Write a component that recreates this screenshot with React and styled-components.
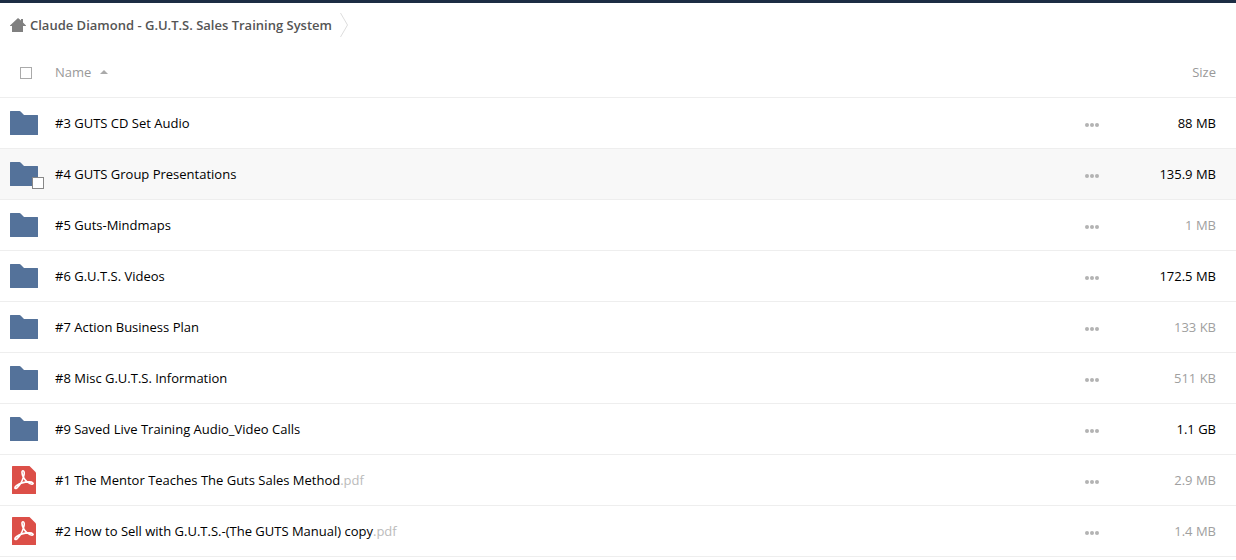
import React, { useState } from "react";
import styled, { createGlobalStyle } from "styled-components";

const initialFiles = [
  { name: "#3 GUTS CD Set Audio", type: "folder", size: "88 MB", large: true },
  { name: "#4 GUTS Group Presentations", type: "folder", size: "135.9 MB", large: true },
  { name: "#5 Guts-Mindmaps", type: "folder", size: "1 MB" },
  { name: "#6 G.U.T.S. Videos", type: "folder", size: "172.5 MB", large: true },
  { name: "#7 Action Business Plan", type: "folder", size: "133 KB" },
  { name: "#8 Misc G.U.T.S. Information", type: "folder", size: "511 KB" },
  { name: "#9 Saved Live Training Audio_Video Calls", type: "folder", size: "1.1 GB", large: true },
  { name: "#1 The Mentor Teaches The Guts Sales Method", ext: ".pdf", type: "pdf", size: "2.9 MB" },
  { name: "#2 How to Sell with G.U.T.S.-(The GUTS Manual) copy", ext: ".pdf", type: "pdf", size: "1.4 MB" },
];

// ICONS

const HomeIcon = () => (
  <svg width="16" height="14" viewBox="0 0 16 14" fill="#808080" aria-hidden="true">
    <path d="M8 0L11 2.6V1H13V4.5L16 7.5V8H13V14H2V8H0V7.5Z" />
  </svg>
);

const CrumbArrow = () => (
  <svg width="10" height="26" viewBox="0 0 10 26" fill="none" stroke="#ddd" aria-hidden="true">
    <path d="M0.5 1L7.5 13L0.5 25" />
  </svg>
);

const FolderIcon = () => (
  <svg width="28" height="24" viewBox="0 0 28 24" fill="#54729a" aria-hidden="true">
    <path d="M0 0.5Q0 0 0.5 0H9.5Q10.2 0 10.8 0.7L14 4H27.5Q28 4 28 4.5V23.5Q28 24 27.5 24H0.5Q0 24 0 23.5Z" />
  </svg>
);

const PdfIcon = () => (
  <svg width="24" height="28" viewBox="0 0 24 28" aria-hidden="true">
    <path d="M0.5 0H17.5L24 6.5V27.5Q24 28 23.5 28H0.5Q0 28 0 27.5V0.5Q0 0 0.5 0Z" fill="#dc4f48" />
    <path
      d="M11.1 4.8C9.6 4.6 9.6 7.6 11.2 10.8C13 14.6 17.4 18.4 20.2 18.2C22.2 17.9 21 16 17.4 15.9C12.6 15.8 7.2 17.6 4.4 19.6C1.9 21.5 2.7 23.5 4.8 22C7.7 19.8 10.5 14.4 11.8 9.9C12.6 7 12.3 5 11.1 4.8Z"
      fill="none"
      stroke="#fff"
      strokeWidth="1.6"
    />
  </svg>
);

const DotsIcon = () => (
  <svg width="14" height="4" viewBox="0 0 14 4" fill="#b3b3b3" aria-hidden="true">
    <circle cx="2" cy="2" r="2" />
    <circle cx="7" cy="2" r="2" />
    <circle cx="12" cy="2" r="2" />
  </svg>
);

const FileRow = ({ file, active, onHover }) => {
  return (
    <Row $active={active} onMouseEnter={onHover}>
      <IconCell>
        <Thumbnail>
          {file.type === "folder" ? <FolderIcon /> : <PdfIcon />}
          {active && <RowCheckbox type="checkbox" aria-label={`Select ${file.name}`} />}
        </Thumbnail>
      </IconCell>
      <td>
        <FileLink href="#">
          {file.name}
          {file.ext && <span>{file.ext}</span>}
        </FileLink>
      </td>
      <ActionCell>
        <MoreButton type="button" aria-label={`Actions for ${file.name}`}>
          <DotsIcon />
        </MoreButton>
      </ActionCell>
      <SizeCell $large={file.large}>{file.size}</SizeCell>
    </Row>
  );
};

const App = () => {
  const [activeRow, setActiveRow] = useState(1);

  // RENDER
  return (
    <>
      <GlobalStyle />
      <TopBar />
      <Breadcrumbs aria-label="Breadcrumb">
        <a href="#">
          <HomeIcon />
          Claude Diamond - G.U.T.S. Sales Training System
        </a>
        <CrumbArrow />
      </Breadcrumbs>
      <FileTable>
        <thead>
          <tr>
            <SelectHeader>
              <Checkbox type="checkbox" aria-label="Select all" />
            </SelectHeader>
            <th>
              <SortButton type="button">
                Name
                <svg width="8" height="4" viewBox="0 0 8 4" fill="#aaa" aria-hidden="true">
                  <path d="M4 0L8 4H0Z" />
                </svg>
              </SortButton>
            </th>
            <ActionHeader aria-label="Actions" />
            <SizeHeader>
              <SortButton type="button">Size</SortButton>
            </SizeHeader>
          </tr>
        </thead>
        <tbody>
          {initialFiles.map((file, index) => (
            <FileRow
              key={file.name}
              file={file}
              active={index === activeRow}
              onHover={() => setActiveRow(index)}
            />
          ))}
        </tbody>
      </FileTable>
    </>
  );
};

export default App;

// STYLES

const GlobalStyle = createGlobalStyle`
  * {
    box-sizing: border-box;
  }

  body {
    margin: 0;
    background: #fff;
    color: #000;
    font-family: "Open Sans", sans-serif;
    font-size: 13px;
    line-height: 20px;
  }

  svg {
    display: block;
    flex-shrink: 0;
  }
`;

const TopBar = styled.div`
  height: 3px;
  background: #1d2d44;
`;

const Breadcrumbs = styled.nav`
  display: flex;
  align-items: center;
  gap: 8px;
  height: 44px;
  padding: 0 10px;

  a {
    display: flex;
    align-items: center;
    gap: 4px;
    color: #555;
    font-weight: 600;
    text-decoration: none;
  }
`;

const FileTable = styled.table`
  width: 100%;
  border-collapse: separate;
  border-spacing: 0;
  table-layout: fixed;

  th,
  td {
    height: 51px;
    padding: 0;
    border-bottom: 1px solid #eee;
    text-align: left;
    vertical-align: middle;
    font-weight: 400;
  }
`;

const SelectHeader = styled.th`
  width: 55px;

  && {
    padding: 2px 0 0 20px;
  }
`;

const ActionHeader = styled.th`
  width: 60px;
`;

const SizeHeader = styled.th`
  width: 100px;

  && {
    padding-right: 20px;
    text-align: right;
  }
`;

const SortButton = styled.button`
  display: inline-flex;
  align-items: center;
  gap: 9px;
  padding: 0;
  border: none;
  background: transparent;
  color: #999;
  font: inherit;
  cursor: pointer;
`;

const Checkbox = styled.input`
  appearance: none;
  display: block;
  width: 12px;
  height: 12px;
  margin: 0;
  border: 1px solid #aaa;
  background: #fff;
  cursor: pointer;

  &:checked {
    background: #54729a;
  }
`;

const Row = styled.tr`
  background: ${({ $active }) => ($active ? "#f8f8f8" : "#fff")};
`;

const IconCell = styled.td`
  && {
    padding-left: 10px;
  }
`;

const Thumbnail = styled.div`
  position: relative;
  display: flex;
  justify-content: center;
  width: 28px;
`;

const RowCheckbox = styled(Checkbox)`
  position: absolute;
  right: -6px;
  bottom: -3px;
  border-color: #888;
`;

const FileLink = styled.a`
  color: #000;
  text-decoration: none;

  span {
    color: #bbb;
  }
`;

const ActionCell = styled.td`
  && {
    padding: 4px 0 0 9px;
  }
`;

const MoreButton = styled.button`
  display: block;
  padding: 0;
  border: none;
  background: transparent;
  cursor: pointer;
`;

const SizeCell = styled.td`
  color: ${({ $large }) => ($large ? "#000" : "#a0a0a0")};

  && {
    padding-right: 20px;
    text-align: right;
  }
`;
